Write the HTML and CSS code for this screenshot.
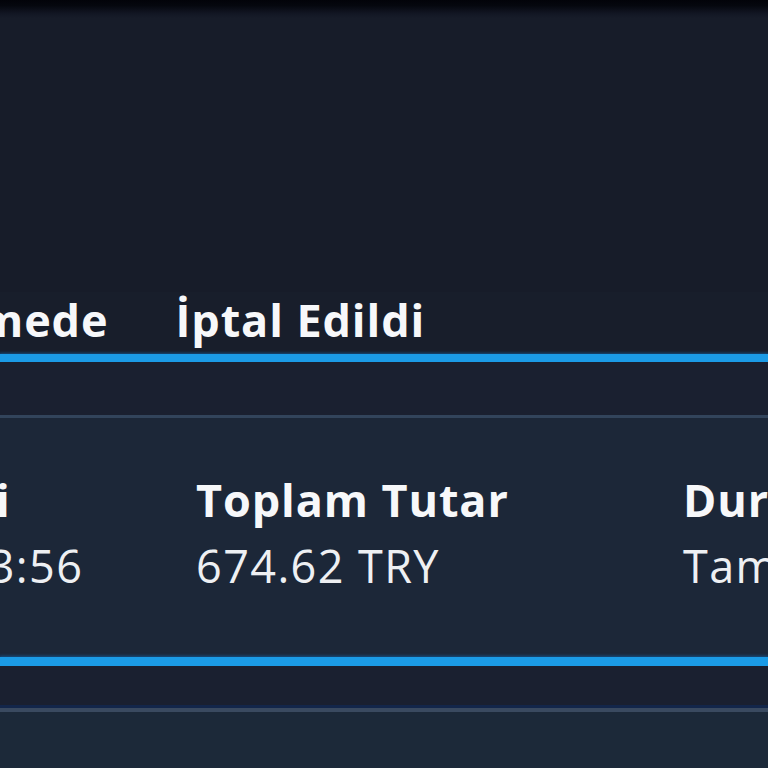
FILE: index.html
```
<!DOCTYPE html>
<html lang="tr">
<head>
<meta charset="utf-8">
<title>Siparişler</title>
<link rel="stylesheet" href="styles.css">
</head>
<body>
<div class="page">
  <div class="topbar"></div>
  <div class="spacer"></div>
  <nav class="tabs">
    <div class="tab">Tamamlandı</div>
    <div class="tab">Beklemede</div>
    <div class="tab">İptal Edildi</div>
  </nav>
  <div class="tab-line"></div>
  <div class="gap"></div>
  <section class="card">
    <div class="cols">
      <div class="col">
        <div class="label">Sipariş Tarihi</div>
        <div class="value">12.03.2024 13:56</div>
      </div>
      <div class="col">
        <div class="label">Toplam Tutar</div>
        <div class="value">674.62 TRY</div>
      </div>
      <div class="col">
        <div class="label">Durum</div>
        <div class="value">Tamamlandı</div>
      </div>
    </div>
  </section>
  <div class="card-line"></div>
  <div class="gap2"></div>
  <section class="card2"></section>
</div>
</body>
</html>
```
FILE: styles.css
```
* { box-sizing: border-box; }
html, body {
  margin: 0;
  padding: 0;
  background: #171c29;
  overflow: hidden;
}
.page {
  width: 768px;
  height: 768px;
  overflow: hidden;
  display: flex;
  flex-direction: column;
  font-family: "Open Sans", "DejaVu Sans", sans-serif;
  color: #ffffff;
}
.topbar {
  height: 18px;
  flex: none;
  background: linear-gradient(#020309 0%, #05070e 30%, #121623 75%, #171c29 100%);
}
.spacer {
  height: 274px;
  flex: none;
  background: #171c29;
}
.tabs {
  display: flex;
  gap: 67px;
  margin-left: -508px;
  height: 62px;
  flex: none;
  align-items: flex-start;
  background: #181e2b;
  white-space: nowrap;
}
.tab {
  font-size: 45px;
  font-weight: 700;
  letter-spacing: 0.9px;
  line-height: 56px;
  color: #f7f8fa;
}
.tab-line {
  height: 8px;
  flex: none;
  background: #1b9be6;
  box-shadow: 0 0 3px 1px rgba(20, 120, 200, 0.55);
}
.gap {
  height: 56px;
  flex: none;
  background: #1a2030;
  border-bottom: 3px solid #32445b;
}
.card {
  height: 239px;
  flex: none;
  background: #1c2738;
  padding-top: 56px;
}
.cols {
  display: grid;
  grid-template-columns: 491px 487px 487px;
  margin-left: -295px;
  white-space: nowrap;
}
.label {
  font-size: 45px;
  font-weight: 700;
  letter-spacing: 0.9px;
  line-height: 52px;
  color: #f7f8fa;
}
.value {
  font-size: 45px;
  font-weight: 400;
  letter-spacing: 1.4px;
  line-height: 58px;
  margin-top: 11px;
  color: #eef0f3;
}
.card-line {
  height: 9px;
  flex: none;
  background: #1b9be6;
  box-shadow: 0 0 3px 1px rgba(20, 110, 190, 0.6);
}
.gap2 {
  height: 46px;
  flex: none;
  background: #1a2030;
  border-bottom: 4px solid #3a4a60;
  box-shadow: inset 0 -3px 0 0 #13264a;
}
.card2 {
  flex: 1;
  background: #1c2939;
}
```
